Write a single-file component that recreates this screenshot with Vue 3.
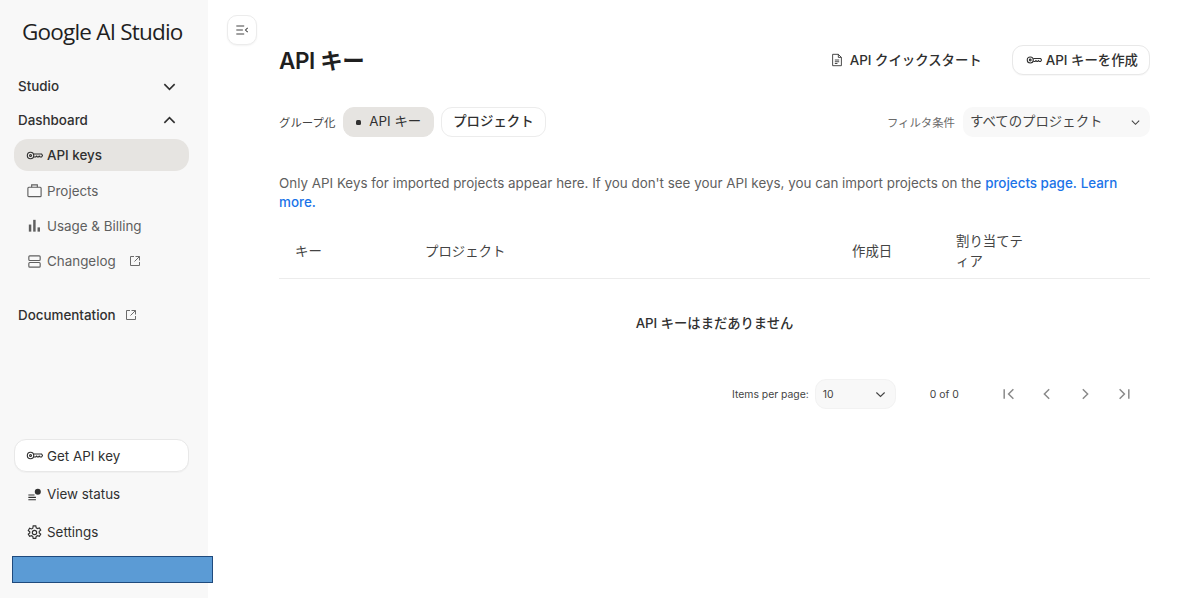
<template>
  <div class="page">
    <aside class="sidebar">
      <div class="logo">Google AI Studio</div>

      <nav class="nav">
        <div class="section">
          <span>Studio</span>
          <svg class="chev" viewBox="0 0 16 16"><path d="M2.500 5.500 8 11l5.500-5.500" /></svg>
        </div>
        <div class="section">
          <span>Dashboard</span>
          <svg class="chev" viewBox="0 0 16 16"><path d="M2.500 10.500 8 5l5.500 5.500" /></svg>
        </div>

        <div class="item active">
          <svg class="icon" viewBox="0 0 18 18"><circle cx="4.800" cy="9" r="3.400" /><circle cx="4.800" cy="9" r="1" /><path d="M8.200 7.400h8.300l1 1.600-1 1.600h-1.600l-.9-.9-.9.9h-1l-.9-.9-.9.9H8.200" /></svg>
          <span>API keys</span>
        </div>
        <div class="item">
          <svg class="icon" viewBox="0 0 18 18"><rect x="2" y="5.500" width="14" height="10" rx="1" /><path d="M6 5.500V3h6v2.500" /></svg>
          <span>Projects</span>
        </div>
        <div class="item">
          <svg class="icon solid" viewBox="0 0 18 18"><rect x="3" y="8" width="2.600" height="7.500" /><rect x="7.600" y="3" width="2.600" height="12.500" /><rect x="12.200" y="11" width="2.600" height="4.500" /></svg>
          <span>Usage &amp; Billing</span>
        </div>
        <div class="item">
          <svg class="icon" viewBox="0 0 18 18"><rect x="3" y="3" width="12" height="5" rx="1" /><rect x="3" y="10" width="12" height="5" rx="1" /></svg>
          <span>Changelog</span>
          <svg class="ext" viewBox="0 0 12 12"><path d="M5 1.500H1.500v9h9V7M6.500 1.500h4v4M10.500 1.500 5.500 6.500" /></svg>
        </div>

        <div class="section doc">
          <span>Documentation</span>
          <svg class="ext" viewBox="0 0 12 12"><path d="M5 1.500H1.500v9h9V7M6.500 1.500h4v4M10.500 1.500 5.500 6.500" /></svg>
        </div>
      </nav>

      <div class="bottom">
        <div class="item key-btn">
          <svg class="icon" viewBox="0 0 18 18"><circle cx="4.800" cy="9" r="3.400" /><circle cx="4.800" cy="9" r="1" /><path d="M8.200 7.400h8.300l1 1.600-1 1.600h-1.600l-.9-.9-.9.9h-1l-.9-.9-.9.9H8.200" /></svg>
          <span>Get API key</span>
        </div>
        <div class="item plain status">
          <svg class="icon" viewBox="0 0 18 18"><path d="M2.500 9.500h6.500M2.500 12h8M2.500 14.500h8" /><circle class="dot" cx="12.500" cy="6" r="3.200" /></svg>
          <span>View status</span>
        </div>
        <div class="item plain settings">
          <svg class="icon" viewBox="0 0 18 18"><path d="M7.600 2h2.800l.4 2 1.400.8 2-.7 1.400 2.400-1.600 1.300v1.600l1.600 1.300-1.400 2.400-2-.7-1.400.8-.4 2H7.600l-.4-2-1.400-.8-2 .7-1.400-2.400 1.600-1.300V8.200L2.400 6.900l1.400-2.400 2 .7 1.400-.8z" /><circle cx="9" cy="9" r="2.300" /></svg>
          <span>Settings</span>
        </div>
      </div>
    </aside>

    <div class="redacted"></div>

    <div class="toggle-col">
      <button class="toggle">
        <svg viewBox="0 0 16 16"><path d="M1.500 3.500h9M1.500 8h7.500M1.500 12.500h9M14.500 5.500 12 8l2.500 2.500" /></svg>
      </button>
    </div>

    <main class="main">
      <header class="head">
        <h1>API キー</h1>
        <div class="head-actions">
          <div class="quick">
            <svg viewBox="0 0 16 16"><path d="M3 1.500h6.500L13 5v9.500H3zM9.500 1.500V5H13M5.500 8h5M5.500 10h5M5.500 12h3" /></svg>
            <span>API クイックスタート</span>
          </div>
          <button class="create">
            <svg viewBox="0 0 18 18"><circle cx="4.800" cy="9" r="3.400" /><circle cx="4.800" cy="9" r="1" /><path d="M8.200 7.400h8.300l1 1.600-1 1.600h-1.600l-.9-.9-.9.9h-1l-.9-.9-.9.9H8.200" /></svg>
            <span>API キーを作成</span>
          </button>
        </div>
      </header>

      <div class="filters">
        <div class="group">
          <span class="label">グループ化</span>
          <div class="chip on"><i></i>API キー</div>
          <div class="chip">プロジェクト</div>
        </div>
        <div class="filter">
          <span class="label muted">フィルタ条件</span>
          <div class="select">
            <span>すべてのプロジェクト</span>
            <svg viewBox="0 0 12 12"><path d="M2 4l4 4 4-4" /></svg>
          </div>
        </div>
      </div>

      <p class="note">
        Only API Keys for imported projects appear here. If you don't see your API keys, you can import projects on the
        <a>projects page.</a> <a>Learn more.</a>
      </p>

      <div class="thead">
        <div>キー</div>
        <div>プロジェクト</div>
        <div>作成日</div>
        <div class="tier">割り当てティア</div>
      </div>
      <div class="empty">API キーはまだありません</div>

      <div class="pager">
        <span class="per">Items per page:</span>
        <div class="size">
          <span>10</span>
          <svg viewBox="0 0 12 12"><path d="M1.500 3.800 6 8.200l4.500-4.400" /></svg>
        </div>
        <span class="count">0 of 0</span>
        <div class="arrows">
          <svg v-for="a in arrows" :key="a" viewBox="0 0 16 16"><path :d="a" /></svg>
        </div>
      </div>
    </main>
  </div>
</template>

<script setup>
const arrows = [
  "M2.500 2.500v11M13 2.500 7.500 8l5.500 5.500",
  "M10.500 2.500 5 8l5.500 5.500",
  "M5.500 2.500 11 8l-5.500 5.500",
  "M3 2.500 8.500 8 3 13.500M13.500 2.500v11",
];
</script>

<style>
html,
body {
  margin: 0;
  background: #fff;
}
</style>

<style scoped>
.page {
  position: relative;
  display: flex;
  height: 598px;
  overflow: hidden;
  font-family: Inter, "Noto Sans CJK JP", sans-serif;
  color: #1f1f1f;
}

svg {
  fill: none;
  stroke: currentColor;
  flex: none;
}

.sidebar {
  width: 208px;
  flex: none;
  display: flex;
  flex-direction: column;
  box-sizing: border-box;
  background: #f8f8f8;
  padding: 0 19px 47px 14px;
}

.logo {
  margin: 18px 0 0 8px;
  height: 28px;
  line-height: 28px;
  font-family: "Open Sans", sans-serif;
  font-size: 22.500px;
  letter-spacing: -0.800px;
  white-space: nowrap;
  color: #1f1f1f;
}

.nav {
  margin-top: 23px;
}

.section {
  height: 34px;
  display: flex;
  align-items: center;
  justify-content: space-between;
  padding: 0 12px 0 4px;
  font-size: 13.400px;
  font-weight: 500;
  color: #303030;
}

.section.doc {
  justify-content: flex-start;
  gap: 9px;
  margin-top: 19px;
}

.chev {
  width: 15px;
  height: 15px;
  stroke-width: 1.700;
}

.item {
  height: 35.300px;
  display: flex;
  align-items: center;
  gap: 4px;
  padding-left: 12px;
  font-size: 13.400px;
  color: #5f5f5f;
}

.item .icon {
  width: 17px;
  height: 17px;
  stroke-width: 1.200;
}

.icon.solid {
  fill: currentColor;
  stroke: none;
}

.item.active {
  height: 32px;
  margin-top: 2px;
  margin-bottom: 2px;
  border-radius: 14px;
  background: #e6e4e1;
  color: #303030;
  font-weight: 500;
}

.ext {
  width: 12px;
  height: 12px;
  margin-left: 9px;
  stroke-width: 1;
  color: #6b6b6b;
}

.section.doc .ext {
  margin-left: 0;
}

.bottom {
  margin-top: auto;
  color: #303030;
}

.item.key-btn {
  height: 33px;
  box-sizing: border-box;
  padding-left: 11px;
  background: #fff;
  border: 1px solid #e8e8e8;
  border-radius: 12px;
  color: #303030;
  box-shadow: 0 1px 1px rgba(0, 0, 0, 0.03);
}

.item.plain {
  height: 38px;
  color: #303030;
}

.status {
  margin-top: 3px;
}

.dot {
  fill: #303030;
  stroke: none;
}

.redacted {
  position: absolute;
  left: 12px;
  top: 556px;
  width: 201px;
  height: 27px;
  box-sizing: border-box;
  background: #5b9bd5;
  border: 1px solid #1f4a7d;
}

.toggle-col {
  width: 71px;
  flex: none;
  padding: 15px 0 0 19px;
  box-sizing: border-box;
}

.toggle {
  width: 30px;
  height: 30px;
  padding: 0;
  display: flex;
  align-items: center;
  justify-content: center;
  box-sizing: border-box;
  background: #fff;
  border: 1px solid #ececec;
  border-radius: 10px;
  color: #444;
  box-shadow: 0 1px 2px rgba(0, 0, 0, 0.05);
}

.toggle svg {
  width: 14px;
  height: 14px;
  stroke-width: 1.200;
}

.main {
  width: 871px;
  flex: none;
  padding-top: 45px;
  box-sizing: border-box;
}

.head {
  display: flex;
  align-items: center;
  justify-content: space-between;
  height: 30px;
}

h1 {
  margin: 0;
  padding-bottom: 2px;
  font-size: 22.500px;
  font-weight: 600;
  color: #1f1f1f;
  letter-spacing: -0.400px;
}

.head-actions {
  display: flex;
  align-items: center;
  gap: 30px;
}

.quick,
.create {
  display: flex;
  align-items: center;
  font-family: inherit;
  font-size: 13.400px;
  font-weight: 500;
  color: #303030;
}

.quick span,
.create span {
  padding-bottom: 2px;
}

.quick {
  gap: 6px;
}

.create {
  gap: 4px;
}

.quick svg {
  width: 14px;
  height: 14px;
  stroke-width: 1;
}

.create {
  height: 30px;
  padding: 0 11px 0 13px;
  box-sizing: border-box;
  background: #fff;
  border: 1px solid #e8e8e8;
  border-radius: 11px;
  box-shadow: 0 1px 1px rgba(0, 0, 0, 0.03);
}

.create svg {
  width: 16px;
  height: 16px;
  stroke-width: 1.200;
}

.filters {
  display: flex;
  align-items: center;
  justify-content: space-between;
  height: 30px;
  margin-top: 32px;
}

.group,
.filter {
  display: flex;
  align-items: center;
}

.label {
  font-size: 11.400px;
  color: #444;
  margin-right: 8px;
}

.label.muted {
  color: #6b6b6b;
  margin-right: 8px;
}

.chip {
  height: 30px;
  display: flex;
  align-items: center;
  box-sizing: border-box;
  padding: 0 11px 4px;
  margin-right: 7px;
  background: #fff;
  border: 1px solid #ececec;
  border-radius: 11px;
  font-size: 13.400px;
  font-weight: 500;
  color: #303030;
}

.chip.on {
  background: #e6e4e1;
  border-color: #e6e4e1;
  font-weight: 400;
  padding: 0 12px 4px;
}

.chip i {
  width: 5px;
  height: 5px;
  margin-top: 4px;
  border-radius: 1.500px;
  background: #303030;
  margin-right: 8px;
}

.select {
  width: 187px;
  height: 30px;
  display: flex;
  align-items: center;
  justify-content: space-between;
  box-sizing: border-box;
  padding: 0 9px 0 7px;
  background: #f8f8f8;
  border-radius: 10px;
  font-size: 13.400px;
  color: #444;
}

.select span {
  padding-bottom: 4px;
}

.select svg {
  width: 11px;
  height: 11px;
  stroke-width: 1.200;
}

.note {
  margin: 37px 0 0;
  font-size: 13.400px;
  line-height: 19px;
  color: #5f5f5f;
}

.note a {
  color: #1a73e8;
  font-weight: 500;
}

.thead {
  display: grid;
  grid-template-columns: 130px 427px 104px 1fr;
  align-items: center;
  height: 53px;
  margin-top: 14px;
  padding-left: 16px;
  box-sizing: border-box;
  border-bottom: 1px solid #ececec;
  font-size: 13.400px;
  line-height: 19px;
  color: #444;
}

.thead div {
  padding-bottom: 2px;
}

.thead .tier {
  width: 72px;
  padding-bottom: 3px;
  line-height: 20px;
}

.empty {
  margin-top: 35px;
  text-align: center;
  font-size: 13.300px;
  line-height: 18px;
  font-weight: 500;
  color: #303030;
}

.pager {
  display: flex;
  align-items: center;
  margin-top: 47px;
  padding-left: 453px;
  height: 30px;
}

.per {
  font-size: 10.400px;
  color: #444;
  margin-right: 6px;
  white-space: nowrap;
}

.size {
  width: 81px;
  height: 30px;
  display: flex;
  align-items: center;
  justify-content: space-between;
  box-sizing: border-box;
  padding: 0 9px 0 7px;
  background: #f8f8f8;
  border: 1px solid #f2f2f2;
  border-radius: 11px;
  font-size: 10.400px;
  color: #444;
}

.size svg {
  width: 11px;
  height: 11px;
  stroke-width: 1.200;
}

.count {
  margin-left: 34px;
  font-size: 10.400px;
  color: #444;
  white-space: nowrap;
}

.arrows {
  display: flex;
  gap: 24.300px;
  margin-left: 43px;
  color: #8a8a8a;
}

.arrows svg {
  width: 14px;
  height: 14px;
  stroke-width: 1.700;
}
</style>
